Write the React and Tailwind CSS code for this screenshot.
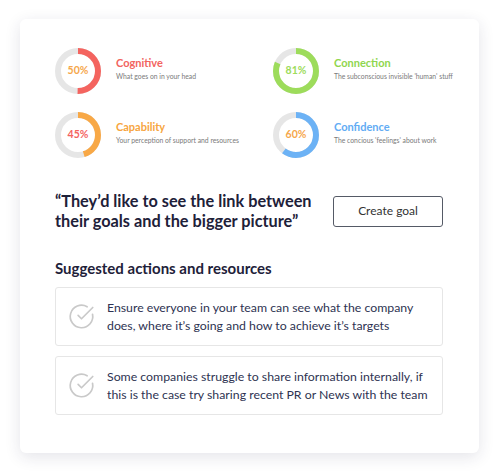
import React from 'react'
import { CircleCheckBig } from 'lucide-react'

// 지표 데이터
const metrics = [
  { title: 'Cognitive', desc: 'What goes on in your head', pct: 50, ring: '#f4645f', text: '#f6a74b', titleColor: 'text-[#f26460]' },
  { title: 'Connection', desc: "The subconscious invisible 'human' stuff", pct: 81, ring: '#9ddc5b', text: '#9ddc5b', titleColor: 'text-[#8fd64e]' },
  { title: 'Capability', desc: 'Your perception of support and resources', pct: 45, ring: '#f8a846', text: '#f4645f', titleColor: 'text-[#f7a540]' },
  { title: 'Confidence', desc: "The concious 'feelings' about work", pct: 60, ring: '#6cb2f5', text: '#f6a74b', titleColor: 'text-[#62acf4]' },
]

const actions = [
  'Ensure everyone in your team can see what the company does, where it’s going and how to achieve it’s targets',
  'Some companies struggle to share information internally, if this is the case try sharing recent PR or News with the team',
]

function Donut({ pct, ring, text }) {
  const r = 20
  const c = 2 * Math.PI * r
  return (
    <div className="relative w-[46px] h-[46px] shrink-0">
      <svg width="46" height="46" viewBox="0 0 46 46">
        <circle cx="23" cy="23" r={r} fill="none" stroke="#e6e6e6" strokeWidth="6" />
        <circle
          cx="23" cy="23" r={r} fill="none" stroke={ring} strokeWidth="6"
          strokeDasharray={`${(c * pct) / 100} ${c}`}
          transform="rotate(-90 23 23)"
        />
      </svg>
      <div className="absolute inset-0 flex items-center justify-center text-[10.5px] font-bold" style={{ color: text }}>
        {pct}%
      </div>
    </div>
  )
}

function Metric({ m }) {
  return (
    <div className="flex items-center gap-[15px]">
      <Donut pct={m.pct} ring={m.ring} text={m.text} />
      <div className="-mt-[6px] whitespace-nowrap">
        <div className={`text-[11px] font-bold leading-[16px] ${m.titleColor}`}>{m.title}</div>
        <div className="text-[6.8px] leading-[11px] text-[#7a7a7a]">{m.desc}</div>
      </div>
    </div>
  )
}

export default function App() {
  return (
    <div className="w-[500px] h-[475px] bg-white pt-[19px] px-[20px] font-['Lato','Noto_Sans',sans-serif]">
      <div className="w-[459px] h-[434px] bg-white rounded-[6px] shadow-[0_4px_16px_rgba(30,35,70,0.12)] pl-[35px] pr-[36px] pt-[29px]">
        {/* 지표 그리드 */}
        <div className="grid grid-cols-[218px_1fr] gap-y-[18px]">
          {metrics.map(m => <Metric key={m.title} m={m} />)}
        </div>

        {/* 인용문 + 버튼 */}
        <div className="mt-[33px] flex items-center justify-between">
          <div className="text-[16.3px] font-bold leading-[20px] text-[#1e2139]">
            “They’d like to see the link between<br />their goals and the bigger picture”
          </div>
          <button className="w-[110px] h-[31px] border border-[#555a66] rounded-[3px] text-[12px] text-[#333]">
            Create goal
          </button>
        </div>

        {/* 추천 액션 */}
        <div className="mt-[27px] text-[15px] font-bold leading-[20px] text-[#1e2139]">
          Suggested actions and resources
        </div>
        <div className="mt-[9px] flex flex-col gap-[10px]">
          {actions.map(a => (
            <div key={a} className="h-[59px] border border-[#e6e6e6] rounded-[3px] flex items-center pl-[12px] pr-[8px] gap-[12px]">
              <CircleCheckBig className="w-[27px] h-[27px] text-[#c9c9c9] shrink-0" strokeWidth={1.5} />
              <div className="text-[12.3px] leading-[18px] text-[#2e3352]">{a}</div>
            </div>
          ))}
        </div>
      </div>
    </div>
  )
}
